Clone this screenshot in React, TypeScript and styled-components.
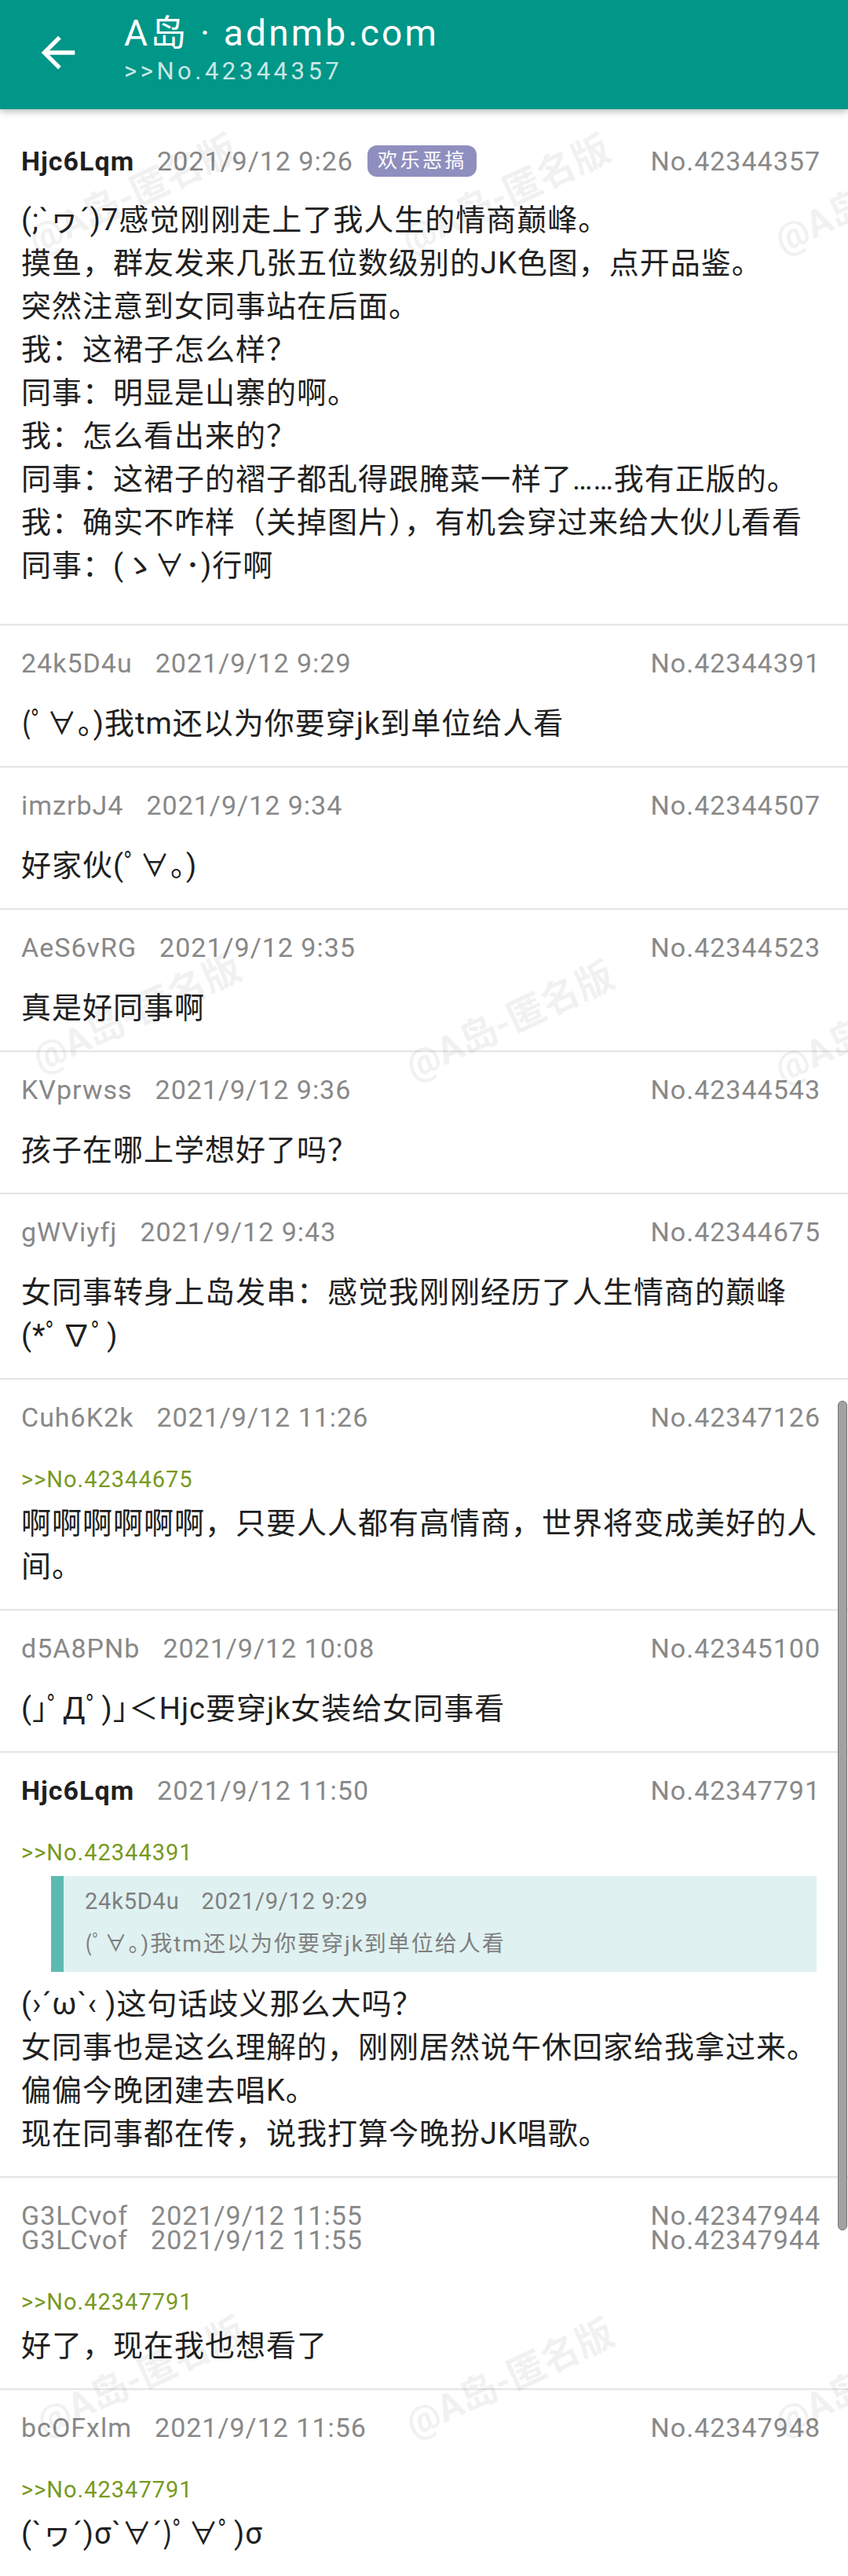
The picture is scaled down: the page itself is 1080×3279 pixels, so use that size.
import React from 'react';
import styled, { createGlobalStyle } from 'styled-components';

const GlobalStyle = createGlobalStyle`
  html, body { margin: 0; padding: 0; background: #ffffff; }
  body { font-family: Roboto, "Noto Sans CJK SC", sans-serif; -webkit-font-smoothing: antialiased; }
`;

const Page = styled.div`
  position: relative;
  width: 1080px;
  height: 3279px;
  overflow: hidden;
  background: #ffffff;
`;

const Header = styled.header`
  position: relative;
  z-index: 2;
  height: 139px;
  background: #009688;
  box-shadow: 0 3px 9px rgba(0, 0, 0, 0.28);
  display: flex;
  align-items: flex-start;
`;

const BackButton = styled.div`
  width: 64px;
  height: 64px;
  margin: 35px 0 0 42px;
  display: flex;
  align-items: center;
  justify-content: center;
`;

const TitleBlock = styled.div`
  margin-left: 52px;
  padding-top: 15px;
  display: flex;
  flex-direction: column;
`;

const Title = styled.div`
  font-size: 46px;
  line-height: 54px;
  letter-spacing: 3.2px;
  color: #ffffff;
  white-space: nowrap;
`;

const Subtitle = styled.div`
  margin-top: 2px;
  font-size: 31px;
  line-height: 40px;
  letter-spacing: 4.5px;
  color: rgba(255, 255, 255, 0.8);
`;

const List = styled.main`
  padding-top: 19px;
`;

const Card = styled.article<{ $main?: boolean }>`
  padding: 25px 35px ${(p) => (p.$main ? 46 : 26)}px 27px;
  border-bottom: 2px solid #e6e6e6;
  margin-bottom: 1px;
  box-shadow: 0 1px 1px rgba(0, 0, 0, 0.03);
`;

const MetaRow = styled.div<{ $ghost?: boolean }>`
  display: flex;
  align-items: center;
  height: 44px;
  margin-top: ${(p) => (p.$ghost ? -13 : 0)}px;
  font-size: 34px;
  line-height: 44px;
  letter-spacing: 1px;
  color: #888888;
  white-space: nowrap;
`;

const UserName = styled.span<{ $po?: boolean }>`
  margin-right: 29px;
  font-weight: ${(p) => (p.$po ? 700 : 400)};
  color: ${(p) => (p.$po ? '#1f1f1f' : '#888888')};
`;

const DateText = styled.span`
  margin-right: 18px;
`;

const Tag = styled.span`
  display: inline-flex;
  align-items: center;
  height: 40px;
  padding: 0 12px 0 13px;
  border-radius: 12px;
  background: #8f8fbf;
  color: #ffffff;
  font-size: 25px;
  letter-spacing: 3.5px;
`;

const PostNo = styled.span`
  margin-left: auto;
`;

const Content = styled.div<{ $main?: boolean }>`
  margin-top: ${(p) => (p.$main ? 26 : 28)}px;
`;

const ReplyLink = styled.div`
  font-size: 29px;
  line-height: 58px;
  letter-spacing: 1px;
  color: #789922;
`;

const Body = styled.div`
  font-size: 38px;
  line-height: 55px;
  letter-spacing: 1px;
  color: #202020;
  white-space: pre-wrap;
  word-break: normal;
`;

const Quote = styled.div`
  margin: 1px 5px 14px 38px;
  padding: 12px 20px 15px 27px;
  background: #dff1f0;
  border-left: 16px solid #5dbab1;
`;

const QuoteMeta = styled.div`
  display: flex;
  gap: 28px;
  font-size: 29px;
  line-height: 40px;
  letter-spacing: 0.8px;
  color: #7f7f7f;
`;

const QuoteBody = styled.div`
  margin-top: 15px;
  font-size: 28px;
  line-height: 40px;
  letter-spacing: 2px;
  color: #7f7f7f;
`;

const Watermark = styled.span`
  position: absolute;
  z-index: 1;
  height: 48px;
  font-size: 48px;
  line-height: 48px;
  font-weight: 700;
  color: rgba(0, 0, 0, 0.055);
  white-space: nowrap;
  transform: rotate(-25deg);
  transform-origin: left bottom;
  pointer-events: none;
`;

const ScrollThumb = styled.div`
  position: absolute;
  z-index: 3;
  right: 1px;
  top: 1783px;
  width: 10px;
  height: 1054px;
  background: #a2a2a2;
  border: 1px solid #727272;
  border-radius: 6px;
`;

type Post = {
  user: string;
  po?: boolean;
  date: string;
  no: string;
  tag?: string;
  doubled?: boolean;
  reply?: string;
  quote?: { user: string; date: string; text: string };
  text: string;
  main?: boolean;
};

const posts: Post[] = [
  {
    user: 'Hjc6Lqm',
    po: true,
    date: '2021/9/12 9:26',
    no: 'No.42344357',
    tag: '欢乐恶搞',
    main: true,
    text:
      '(;`ヮ´)7感觉刚刚走上了我人生的情商巅峰。\n摸鱼，群友发来几张五位数级别的JK色图，点开品鉴。\n突然注意到女同事站在后面。\n我：这裙子怎么样？\n同事：明显是山寨的啊。\n我：怎么看出来的？\n同事：这裙子的褶子都乱得跟腌菜一样了……我有正版的。\n我：确实不咋样（关掉图片），有机会穿过来给大伙儿看看\n同事：(ゝ∀･)行啊',
  },
  { user: '24k5D4u', date: '2021/9/12 9:29', no: 'No.42344391', text: '(ﾟ∀。)我tm还以为你要穿jk到单位给人看' },
  { user: 'imzrbJ4', date: '2021/9/12 9:34', no: 'No.42344507', text: '好家伙(ﾟ∀。)' },
  { user: 'AeS6vRG', date: '2021/9/12 9:35', no: 'No.42344523', text: '真是好同事啊' },
  { user: 'KVprwss', date: '2021/9/12 9:36', no: 'No.42344543', text: '孩子在哪上学想好了吗？' },
  {
    user: 'gWViyfj',
    date: '2021/9/12 9:43',
    no: 'No.42344675',
    text: '女同事转身上岛发串：感觉我刚刚经历了人生情商的巅峰(*ﾟ∇ﾟ)',
  },
  {
    user: 'Cuh6K2k',
    date: '2021/9/12 11:26',
    no: 'No.42347126',
    reply: '>>No.42344675',
    text: '啊啊啊啊啊啊，只要人人都有高情商，世界将变成美好的人间。',
  },
  { user: 'd5A8PNb', date: '2021/9/12 10:08', no: 'No.42345100', text: '(｣ﾟДﾟ)｣＜Hjc要穿jk女装给女同事看' },
  {
    user: 'Hjc6Lqm',
    po: true,
    date: '2021/9/12 11:50',
    no: 'No.42347791',
    reply: '>>No.42344391',
    quote: { user: '24k5D4u', date: '2021/9/12 9:29', text: '(ﾟ∀。)我tm还以为你要穿jk到单位给人看' },
    text:
      '(›´ω`‹ )这句话歧义那么大吗？\n女同事也是这么理解的，刚刚居然说午休回家给我拿过来。\n偏偏今晚团建去唱K。\n现在同事都在传，说我打算今晚扮JK唱歌。',
  },
  {
    user: 'G3LCvof',
    date: '2021/9/12 11:55',
    no: 'No.42347944',
    doubled: true,
    reply: '>>No.42347791',
    text: '好了，现在我也想看了',
  },
  {
    user: 'bcOFxlm',
    date: '2021/9/12 11:56',
    no: 'No.42347948',
    reply: '>>No.42347791',
    text: '(`ヮ´)σ`∀´)ﾟ∀ﾟ)σ',
  },
];

const watermarks = [
  [50, 330],
  [525, 330],
  [1000, 330],
  [55, 1372],
  [530, 1382],
  [1000, 1386],
  [60, 3108],
  [530, 3110],
  [1000, 3108],
];

const BackArrow = () => (
  <svg width="64" height="64" viewBox="0 0 24 24" aria-hidden="true">
    <path fill="#ffffff" d="M20 11H7.83l5.59-5.59L12 4l-8 8 8 8 1.41-1.41L7.83 13H20v-2z" />
  </svg>
);

const Meta = ({ p, ghost }: { p: Post; ghost?: boolean }) => (
  <MetaRow $ghost={ghost}>
    <UserName $po={p.po}>{p.user}</UserName>
    <DateText>{p.date}</DateText>
    {p.tag && <Tag>{p.tag}</Tag>}
    <PostNo>{p.no}</PostNo>
  </MetaRow>
);

export default function App() {
  return (
    <Page>
      <GlobalStyle />
      <Header>
        <BackButton>
          <BackArrow />
        </BackButton>
        <TitleBlock>
          <Title>A岛 · adnmb.com</Title>
          <Subtitle>&gt;&gt;No.42344357</Subtitle>
        </TitleBlock>
      </Header>
      <List>
        {posts.map((p) => (
          <Card key={p.no} $main={p.main}>
            <Meta p={p} />
            {p.doubled && <Meta p={p} ghost />}
            <Content $main={p.main}>
              {p.reply && <ReplyLink>{p.reply}</ReplyLink>}
              {p.quote && (
                <Quote>
                  <QuoteMeta>
                    <span>{p.quote.user}</span>
                    <span>{p.quote.date}</span>
                  </QuoteMeta>
                  <QuoteBody>{p.quote.text}</QuoteBody>
                </Quote>
              )}
              <Body>{p.text}</Body>
            </Content>
          </Card>
        ))}
      </List>
      {watermarks.map(([x, y], i) => (
        <Watermark key={i} style={{ left: x, top: y - 48 }}>
          @A岛-匿名版
        </Watermark>
      ))}
      <ScrollThumb />
    </Page>
  );
}
